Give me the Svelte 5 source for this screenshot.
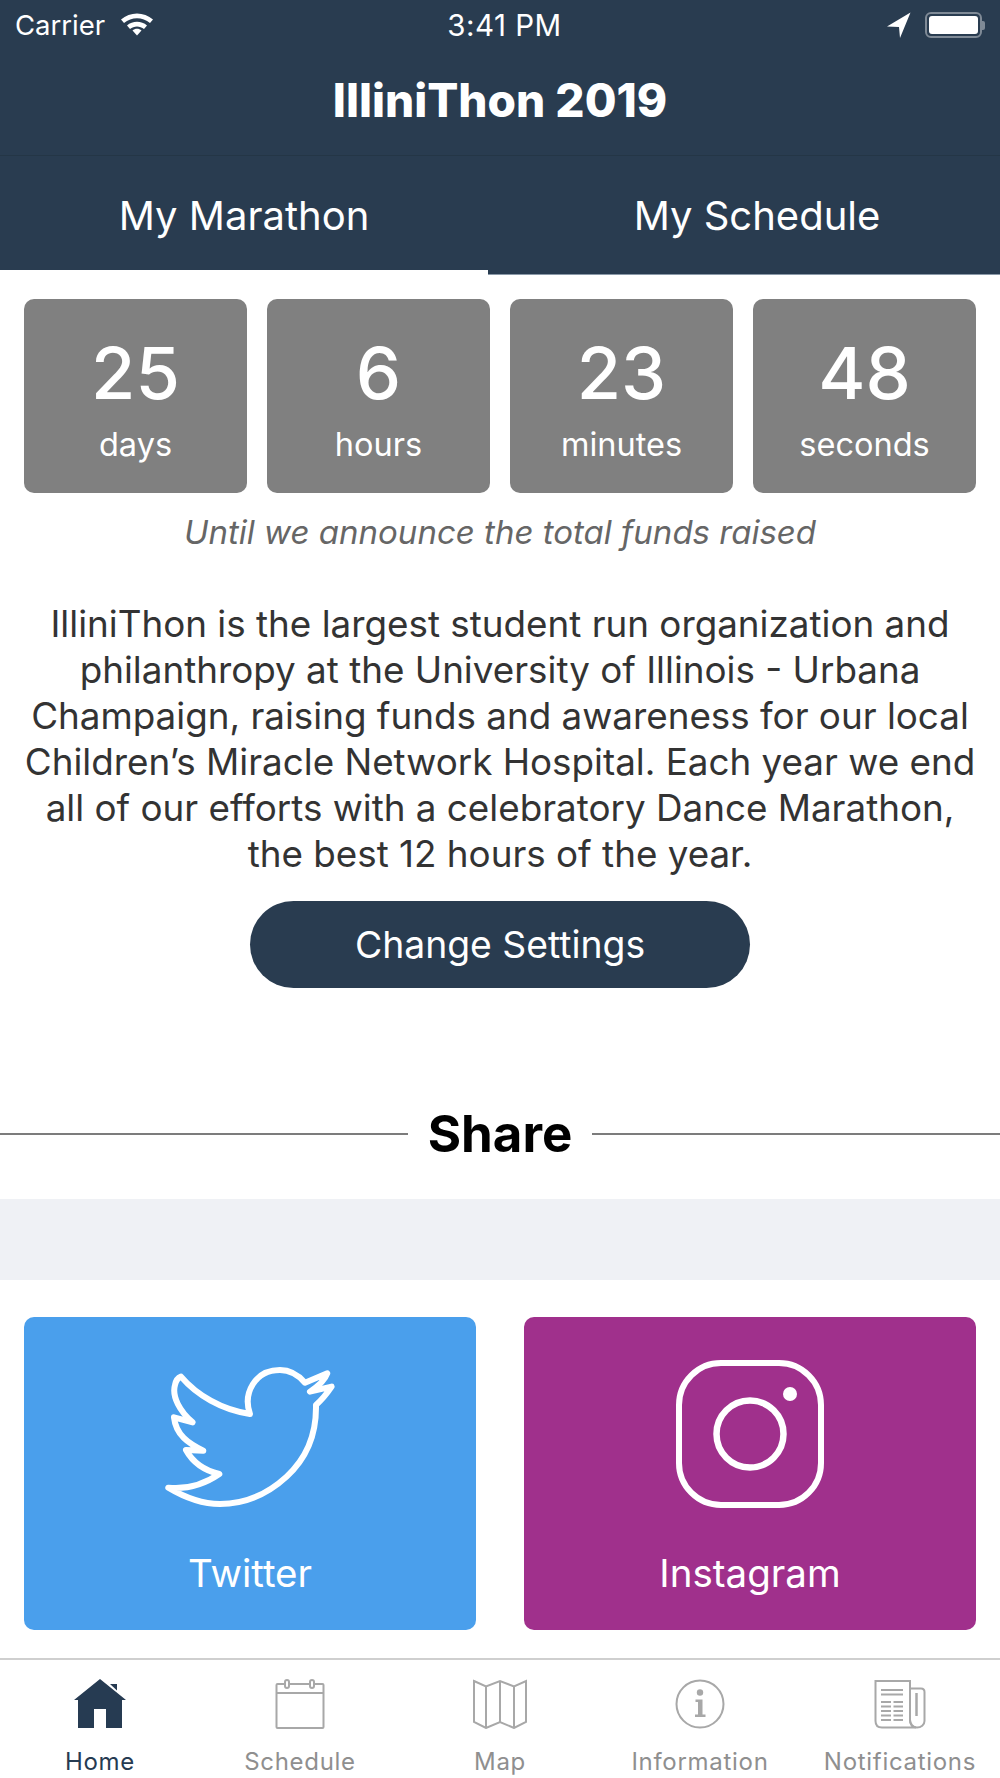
<script>
  const counts = [
    { n: '25', l: 'days' },
    { n: '6', l: 'hours' },
    { n: '23', l: 'minutes' },
    { n: '48', l: 'seconds' }
  ];
</script>

<div class="page">
  <header class="head">
    <div class="status">
      <div class="st-left">
        <span>Carrier</span>
        <svg class="wifi" viewBox="0 0 36 26" width="36" height="26">
          <path d="M2 9.500C11 1.500 25 1.500 34 9.500L31 13C23.500 6.500 12.500 6.500 5 13Z" fill="#fff"/>
          <path d="M8 15.500C13.500 10.500 22.500 10.500 28 15.500L25 19C21 15.500 15 15.500 11 19Z" fill="#fff"/>
          <path d="M13.500 20.500C16 18.300 20 18.300 22.500 20.500L18 25.500Z" fill="#fff"/>
        </svg>
      </div>
      <span class="time">3:41 PM</span>
      <div class="st-right">
        <svg class="loc" viewBox="0 0 24 26" width="24" height="26"><path d="M23.500 0.500L0 14.500L12 15L13 26Z" fill="#fff"/></svg>
        <div class="batt"><div class="batt-in"></div></div><div class="nub"></div>
      </div>
    </div>
    <h1>IlliniThon 2019</h1>
  </header>

  <nav class="tabs">
    <div class="tab on">My Marathon</div>
    <div class="tab off">My Schedule</div>
  </nav>

  <section class="counts">
    {#each counts as c}
      <div class="count">
        <div class="num">{c.n}</div>
        <div class="lab">{c.l}</div>
      </div>
    {/each}
  </section>

  <p class="until">Until we announce the total funds raised</p>

  <p class="about">IlliniThon is the largest student run organization and philanthropy at the University of Illinois - Urbana Champaign, raising funds and awareness for our local Children’s Miracle Network Hospital. Each year we end all of our efforts with a celebratory Dance Marathon, the best 12 hours of the year.</p>

  <div class="btn-row"><button class="btn">Change Settings</button></div>

  <div class="share"><span class="rule"></span><h2>Share</h2><span class="rule"></span></div>

  <div class="band"></div>

  <section class="social">
    <div class="card tw">
      <svg class="ic" viewBox="150 60 200 150" width="200" height="150">
        <g transform="scale(0.3333)">
          <path d="M750 342C728 280 765 210 840 210C870 210 895 225 915 248L982 220C975 240 950 262 930 275L995 260C980 282 965 300 948 315C950 400 925 470 860 530C800 585 730 612 660 612C600 612 550 590 505 563C555 568 610 555 658 522C615 512 580 490 558 450L610 452C565 430 528 405 522 352L578 367C540 335 515 290 525 255C527 245 530 235 543 230C590 285 665 330 750 342Z" fill="none" stroke="#fff" stroke-width="18" stroke-linejoin="round"/>
        </g>
      </svg>
      <span>Twitter</span>
    </div>
    <div class="card ig">
      <svg class="ic" viewBox="0 0 150 150" width="150" height="150">
        <rect x="4" y="3" width="142" height="142" rx="42" fill="none" stroke="#fff" stroke-width="6"/>
        <circle cx="75" cy="74" r="33.500" fill="none" stroke="#fff" stroke-width="6.500"/>
        <circle cx="115" cy="34" r="7" fill="#fff"/>
      </svg>
      <span>Instagram</span>
    </div>
  </section>

  <footer class="bar">
    <div class="item active">
      <svg viewBox="0 0 52 50" width="52" height="50">
        <path d="M26 0L52 21H48V49H32V30H20V49H4V21H0Z" fill="#263b52"/>
        <path d="M36 5H43V11.500Z" fill="#263b52"/>
      </svg>
      <span>Home</span>
    </div>
    <div class="item">
      <svg viewBox="0 0 50 50" width="50" height="50" fill="none" stroke="#a8a8a8" stroke-width="2">
        <rect x="1.500" y="5" width="47" height="44" rx="1"/>
        <path d="M1.500 14H48.500"/>
        <rect x="10" y="1" width="4" height="8" rx="2" fill="#fff"/>
        <rect x="35" y="1" width="4" height="8" rx="2" fill="#fff"/>
      </svg>
      <span>Schedule</span>
    </div>
    <div class="item">
      <svg viewBox="0 0 54 50" width="54" height="50" fill="none" stroke="#a8a8a8" stroke-width="2">
        <path d="M1 2L13 7.500L27 2L41 7.500L53 2V43L41 49L27 43L13 49L1 43Z"/>
        <path d="M13 7.500V49M27 2V43M41 7.500V49"/>
      </svg>
      <span>Map</span>
    </div>
    <div class="item">
      <svg viewBox="0 0 50 50" width="50" height="50">
        <circle cx="25" cy="25" r="23.500" fill="none" stroke="#a8a8a8" stroke-width="2"/>
        <circle cx="25" cy="13.500" r="3.200" fill="#a8a8a8"/>
        <path d="M20.500 20.500H27.500V35.500H30.500V38H20V35.500H23V23H20.500Z" fill="#a8a8a8"/>
      </svg>
      <span>Information</span>
    </div>
    <div class="item">
      <svg viewBox="0 0 52 50" width="52" height="50" fill="none" stroke="#a8a8a8" stroke-width="2">
        <path d="M1.500 2H36V41C36 45 38 48.500 42 48.500H8C4 48.500 1.500 46 1.500 42Z"/>
        <path d="M36 9.500H47C49.500 9.500 50.500 11 50.500 13V42C50.500 46 47 48.500 43 48.500C39 48.500 36 45 36 41"/>
        <path d="M42.500 14V37" stroke-width="2.500"/>
        <path d="M7 11H29M7 15.500H29"/>
        <path d="M7 23H17M7 27.500H17M7 32H17M7 36.500H17M7 41H17M19.500 23H29M19.500 27.500H29M19.500 32H29M19.500 36.500H29M19.500 41H29" stroke-width="1.800"/>
      </svg>
      <span>Notifications</span>
    </div>
  </footer>
</div>

<style>
  :global(body) { margin: 0; background: #fff; }
  .page {
    width: 1000px;
    height: 1778px;
    overflow: hidden;
    font-family: Inter, "Liberation Sans", sans-serif;
    color: #333;
    display: flex;
    flex-direction: column;
  }
  .head {
    flex: none;
    background: #293c50;
    color: #fff;
    height: 155px;
    border-bottom: 1px solid #243646;
    box-sizing: content-box;
  }
  .status {
    height: 50px;
    padding: 0 15px;
    display: grid;
    grid-template-columns: 1fr auto 1fr;
    align-items: center;
    font-size: 27.500px;
  }
  .st-left { display: flex; align-items: center; gap: 14px; }
  .wifi { margin-bottom: 4px; }
  .st-right { display: flex; align-items: center; justify-content: flex-end; gap: 14px; }
  .time { font-size: 29.500px; letter-spacing: 0.5px; margin-left: 9px; }
  .batt {
    width: 49px;
    height: 18px;
    border: 2px solid #7f8a96;
    border-radius: 6px;
    padding: 2px;
    box-sizing: content-box;
  }
  .batt-in { width: 100%; height: 100%; background: #fff; border-radius: 3px; }
  .nub { width: 3px; height: 9px; background: #7f8a96; margin-left: -14px; border-radius: 0 2px 2px 0; }
  h1 {
    margin: 0;
    text-align: center;
    font-size: 46px;
    font-weight: 800;
    line-height: 100px;
  }
  .tabs {
    flex: none;
    display: flex;
    height: 119px;
  }
  .tab {
    color: #fff;
    font-size: 40px;
    text-align: center;
    line-height: 120px;
    background: #293c50;
    box-sizing: border-box;
  }
  .tab.on { width: 488px; height: 114px; }
  .tab.off { width: 512px; padding-left: 26px; border-bottom: 1px solid #8a99a8; }
  .counts {
    flex: none;
    display: grid;
    grid-template-columns: repeat(4, 223px);
    gap: 20px;
    padding: 24px 24px 0;
  }
  .count {
    height: 194px;
    background: #808080;
    border-radius: 10px;
    color: #fff;
    text-align: center;
  }
  .num { font-size: 72px; font-weight: 550; line-height: 80px; padding-top: 34px; }
  .lab { font-size: 32.500px; line-height: 40px; margin-top: 12px; }
  .until {
    margin: 18px 0 0;
    text-align: center;
    font-style: italic;
    font-size: 33px;
    line-height: 42px;
    color: #666;
  }
  .about {
    margin: 48px 20px 0;
    text-align: center;
    font-size: 36.800px;
    line-height: 46px;
    color: #333;
  }
  .btn-row { flex: none; display: flex; justify-content: center; margin-top: 24px; }
  .btn {
    width: 500px;
    height: 87px;
    border: 0;
    border-radius: 44px;
    background: #293c50;
    color: #fff;
    font: 400 37.300px Inter, "Liberation Sans", sans-serif;
  }
  .share { flex: none; display: flex; align-items: center; gap: 20px; margin-top: 116px; height: 60px; }
  .rule { flex: 1; height: 2px; background: #7c7c7c; }
  h2 { margin: 0; font-size: 51px; font-weight: 700; color: #000; line-height: 58px; }
  .band { flex: none; height: 81px; background: #eff1f5; margin-top: 35px; }
  .social {
    flex: none;
    display: grid;
    grid-template-columns: 452px 452px;
    justify-content: space-between;
    padding: 37px 24px 0;
  }
  .card {
    height: 313px;
    border-radius: 10px;
    color: #fff;
    font-size: 38.500px;
    text-align: center;
    display: flex;
    flex-direction: column;
    align-items: center;
  }
  .tw { background: #4a9fec; }
  .ig { background: #a0308c; }
  .ic { display: block; margin-top: 43px; flex: none; }
  .card span { margin-top: 41px; line-height: 44px; }
  .bar {
    flex: none;
    margin-top: 28px;
    border-top: 2px solid #cfcfcf;
    height: 118px;
    display: grid;
    grid-template-columns: repeat(5, 200px);
  }
  .item {
    display: flex;
    flex-direction: column;
    align-items: center;
    padding-top: 19px;
    color: #8f8f8f;
    font-size: 24px;
    letter-spacing: 0.7px;
  }
  .item.active { color: #263b52; }
  .item span { margin-top: 18px; line-height: 30px; white-space: nowrap; }
</style>
